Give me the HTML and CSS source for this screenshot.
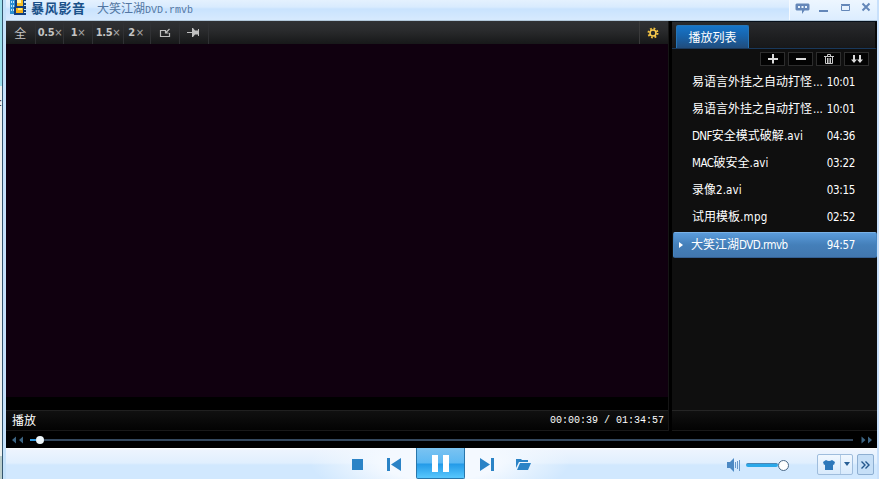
FILE: index.html
```html
<!DOCTYPE html>
<html lang="zh-CN">
<head>
<meta charset="utf-8">
<title>暴风影音</title>
<link rel="stylesheet" href="styles.css">
</head>
<body>
<div class="edge"><span class="edge-mark">:</span></div>
<div class="player">
  <header class="titlebar">
    <svg class="logo" width="18" height="16" viewBox="0 0 18 16" shape-rendering="crispEdges">
      <path d="M0 0h5v14H0z" fill="#2b8fd0"/>
      <path d="M5 0h11v7H5zM4 7h12v8H4z" fill="#123f80"/>
      <path d="M1 1h1v2H1zM3 1h1v2H3zM1 5h1v2H1zM3 5h1v2H3zM1 9h1v2H1zM3 9h1v2H3zM14 1h2v2h-2zM14 5h2v1h-2zM14 9h2v1h-2zM14 12h2v1h-2z" fill="#c5e7fa"/>
      <path d="M7 0h6v6H7z" fill="#f8bf25"/><path d="M7 0h4v3H7z" fill="#fff6b0"/>
      <path d="M6 8h7v5H6z" fill="#f6b21b"/><path d="M8 8h4v2H8z" fill="#ffe875"/>
    </svg>
    <span class="brand">暴风影音</span>
    <span class="filename">大笑江湖<span class="mono">DVD.rmvb</span></span>
    <div class="window-buttons">
      <svg width="86" height="20" viewBox="0 0 86 20">
        <path d="M6.500 3.500h12l1 1v5l-1 1h-4l-2.500 3.500v-3.500h-5.500l-1-1v-5z" fill="#6487b9"/>
        <path d="M8 6h2v2H8zM11.500 6h2v2h-2zM15 6h2v2h-2z" fill="#e8f3fd"/>
        <path d="M29 10h9v2h-9z" fill="#6487b9"/>
        <path d="M51.500 5.500h8v5h-8zM51 4.500h9" fill="none" stroke="#6487b9"/>
        <path d="M72.500 3.500l7 7M79.500 3.500l-7 7" stroke="#6487b9" stroke-width="2"/>
      </svg>
    </div>
  </header>

  <main class="content">
    <section class="stage">
      <div class="toolbar">
        <span class="tool t-full">全</span>
        <span class="tool t-half">0.5<i>×</i></span>
        <span class="tool t-one">1<i>×</i></span>
        <span class="tool t-onehalf">1.5<i>×</i></span>
        <span class="tool t-two">2<i>×</i></span>
        <span class="tool t-icon"><svg width="12" height="10" viewBox="0 0 12 10"><path d="M6 2.500H1.500v6h9V5M6.500 2v3h3M7 4.500L10.500 1" fill="none" stroke="#bdbdbd" stroke-width="1.200"/></svg></span>
        <span class="tool t-icon"><svg width="14" height="11" viewBox="0 0 14 11"><path d="M0 5h5V1h1l2 2.500h3V2h1v7h-1V7.500H8L6 10H5V6H0z" fill="#c0c0c0"/></svg></span>
        <span class="tool settings"><svg width="12" height="12" viewBox="0 0 12 12"><circle cx="6" cy="6" r="4.500" fill="none" stroke="#f5c23d" stroke-width="2" stroke-dasharray="1.770 1.764"/><circle cx="6" cy="6" r="3" fill="none" stroke="#f8ca50" stroke-width="1.600"/></svg></span>
      </div>
      <div class="video"></div>
      <div class="letterbox"></div>
      <div class="status"><span>播放</span><span class="mono time">00:00:39 / 01:34:57</span></div>
    </section>

    <aside class="playlist">
      <div class="tabs"><div class="tab">播放列表</div></div>
      <div class="list-tools">
        <span><svg width="12" height="10" viewBox="0 0 12 10"><path d="M1 5h10M6 0v9.500" stroke="#dcdcdc" stroke-width="2"/></svg></span>
        <span><svg width="12" height="10" viewBox="0 0 12 10"><path d="M1 5h10" stroke="#dcdcdc" stroke-width="2"/></svg></span>
        <span><svg width="10" height="10" viewBox="0 0 10 10"><path d="M0 2.500h10M3.500 2V.5h3V2M1.500 3v6.500h7V3M3.500 4v5M5 4v5M6.500 4v5" fill="none" stroke="#c9c9c9"/></svg></span>
        <span><svg width="12" height="10" viewBox="0 0 12 10"><path d="M3 1v7M9 1v7" stroke="#dcdcdc" stroke-width="2"/><path d="M0 5.500h6L3 9zM6 5.500h6L9 9z" fill="#dcdcdc"/></svg></span>
      </div>
      <ul class="items">
        <li><span class="name">易语言外挂之自动打怪<b class="lat dots">...</b></span><span class="len">10:01</span></li>
        <li><span class="name">易语言外挂之自动打怪<b class="lat dots">...</b></span><span class="len">10:01</span></li>
        <li><span class="name"><b class="lat dnf">DNF</b>安全模式破解<b class="lat avi">.avi</b></span><span class="len">04:36</span></li>
        <li><span class="name"><b class="lat mac">MAC</b>破安全<b class="lat avi">.avi</b></span><span class="len">03:22</span></li>
        <li><span class="name">录像<b class="lat avi">2.avi</b></span><span class="len">03:15</span></li>
        <li><span class="name">试用模板<b class="lat mpg">.mpg</b></span><span class="len">02:52</span></li>
        <li class="playing"><span class="name">大笑江湖<b class="lat rmvb">DVD.rmvb</b></span><span class="len">94:57</span></li>
      </ul>
      <div class="list-foot"></div>
    </aside>
  </main>

  <div class="seek">
    <svg class="rew" width="12" height="8" viewBox="0 0 12 8"><path d="M4 .5v7L0 4zM11 .5v7L7 4z" fill="#3d6583"/></svg>
    <div class="track"><div class="played"></div><div class="knob"></div><div class="rest"></div></div>
    <svg class="fwd" width="12" height="8" viewBox="0 0 12 8"><path d="M.5 .5v7L4.500 4zM7 .5v7L11 4z" fill="#3d6583"/></svg>
  </div>

  <footer class="controls">
    <div class="transport">
      <svg class="stop" width="11" height="11"><path d="M0 0h11v11H0z" fill="#2b83c6"/></svg>
      <svg class="prev" width="14" height="13" viewBox="0 0 14 13"><path d="M0 0h3v13H0zM14 0v13L4 6.500z" fill="#2b83c6"/></svg>
      <div class="pause"><svg width="17" height="17" viewBox="0 0 17 17"><path d="M0 0h6v17H0zM11 0h6v17h-6z" fill="#fff"/></svg></div>
      <svg class="next" width="14" height="13" viewBox="0 0 14 13"><path d="M0 0v13l10-6.500zM11 0h3v13h-3z" fill="#2b83c6"/></svg>
      <svg class="open" width="15" height="11" viewBox="0 0 15 11"><path d="M0 0h5l1 1h6v2H3L0 9zM4 4h11l-3 7H1z" fill="#2b83c6"/></svg>
    </div>
    <svg class="speaker" width="14" height="14" viewBox="0 0 14 14"><path d="M0 4h3l4-4v14l-4-4H0z" fill="#4c89c4"/><path d="M8.500 4v6M10.500 3v8M12.500 2v11" stroke="#6998c9"/></svg>
    <div class="volume"><div class="volume-fill"></div><div class="volume-knob"></div></div>
    <div class="skin"><span class="skin-main"><svg width="12" height="10" viewBox="0 0 12 10"><path d="M3 0q3 2 6 0l3 2-1 3-1-.5V10H2V4.500L1 5 0 2z" fill="#2d78bb"/></svg></span><span class="skin-drop"><svg width="6" height="4"><path d="M0 0h6L3 4z" fill="#285f96"/></svg></span></div>
    <div class="expand"><svg width="9" height="8" viewBox="0 0 9 8"><path d="M.5 .5L4 4 .5 7.500M4.500 .5L8 4l-3.500 3.500" fill="none" stroke="#25588d" stroke-width="1.400"/></svg></div>
  </footer>
</div>
<div class="frame-right"></div>
</body>
</html>
```
FILE: styles.css
```css
* { box-sizing: border-box; }
body {
  margin: 0; width: 879px; height: 479px; overflow: hidden; display: flex;
  font: 12px/16px "Noto Sans CJK SC", sans-serif; color: #fff;
  background: #d3e8fd;
}
svg { display: block; flex: none; }
.edge {
  width: 6px; flex: none; border-left: 2px solid #9de0ed;
  background: linear-gradient(90deg, #34566f 1px, #c5e2fb 1px);
  position: relative;
}
.edge::after { content: ""; position: absolute; left: -2px; top: 86px; width: 2px; height: 393px; background: linear-gradient(#eef1ee 370px, #bacdcb 370px); }
.edge-mark { position: absolute; left: -3px; top: 95px; color: #111; z-index: 1; font: 11px/14px "Liberation Sans", sans-serif; }
.player { width: 871px; flex: none; display: flex; flex-direction: column; }
.frame-right { flex: 1; background: #c8e0fb; }

.titlebar {
  height: 21px; flex: none; display: flex; align-items: flex-start; padding-left: 4px;
  background: linear-gradient(#e4f1fe 0, #d9ebfe 7px, #c9e3fe 9px, #d7eafe 20px, #8ba3b5 21px);
}
.brand { margin-left: 3px; width: 66px; font-size: 13px; line-height: 16px; font-weight: 700; letter-spacing: .7px; color: #1b5189; white-space: nowrap; }
.filename { color: #5276a2; line-height: 16px; white-space: nowrap; }
.mono { font-family: "Liberation Mono", monospace; font-size: 10px; }
.window-buttons { margin-left: auto; width: 88px; height: 20px; background: linear-gradient(#edf6ff, #dcedff); border-left: 1px solid #f5faff; }

.content { height: 410px; display: flex; background: #000; }
.stage { width: 663px; height: 410px; display: flex; flex-direction: column; border-right: 1px solid #151515; }
.toolbar { height: 23px; display: flex; background: linear-gradient(#303134, #292a2c 10px, #171819); }
.tool { height: 23px; display: flex; align-items: center; justify-content: center; border-right: 1px solid #303134; color: #c4c4c4; font: 700 11px/22px "DejaVu Sans Condensed", "Noto Sans CJK SC", sans-serif; letter-spacing: -.3px; }
.tool i { font: 400 10px/22px "DejaVu Sans", sans-serif; color: #a9a9a9; }
.t-full { width: 30px; padding-right: 1px; font: 400 12px/22px "Noto Sans CJK SC", sans-serif; }
.t-half { width: 28px; padding-left: 1px; }
.t-one { width: 29px; }
.t-onehalf { width: 31px; }
.t-two { width: 27px; gap: 1px; padding-right: 2px; }
.t-icon { width: 29px; }
.settings { margin-left: auto; width: 29px; padding-right: 2px; border-left: 1px solid #3a3a3b; border-right: 0; }
.video { height: 353px; background: #10000f; }
.letterbox { height: 13px; background: #000; }
.status { height: 21px; flex: none; display: flex; justify-content: space-between; padding: 0 4px 0 6px; line-height: 18px; border-top: 1px solid #202020; border-bottom: 1px solid #181818; background: linear-gradient(#101010, #030303); }
.time { line-height: 19px; }

.playlist { width: 205px; height: 410px; margin-left: 3px; flex: none; display: flex; flex-direction: column; background: #0f0f0f; border-top: 1px solid #07101a; }
.tabs { height: 27px; padding: 3px 0 0 4px; background: linear-gradient(#292a2d, #1d1e20 16px, #17181a); border-bottom: 1px solid #19385b; border-right: 2px solid #080808; }
.tab { width: 73px; height: 23px; border: 1px solid #2674b6; border-bottom: 0; border-radius: 2px 2px 0 0; text-align: center; line-height: 22px; background: linear-gradient(#1675ca, #1864ac 10px, #214d7d); }
.list-tools { height: 20px; display: flex; gap: 3px; padding: 3px 0 0 88px; }
.list-tools span { width: 25px; height: 14px; display: flex; align-items: center; justify-content: center; background: #030303; border: 1px solid #2d2d2d; }
.items { list-style: none; margin: 0; padding: 0; }
.items li { height: 27px; display: flex; align-items: center; padding: 0 0 2px 20px; position: relative; white-space: nowrap; }
.name { width: 134px; }
.lat, .len { font: 400 11.500px/16px "DejaVu Sans Condensed", sans-serif; }
.dots { letter-spacing: 0; margin-left: 1px; }
.dnf { letter-spacing: -.6px; }
.mac { letter-spacing: -.5px; }
.avi { letter-spacing: .1px; }
.mpg { letter-spacing: .3px; }
.rmvb { letter-spacing: -.55px; }
.len { width: 29px; text-align: right; letter-spacing: -.3px; }
.items .playing { padding: 0 0 1px 17px; margin: 1px 0 0 1px; height: 26px; border: 1px solid #78b1e8; border-color: #79b1e6 #4383bf #345f92; border-radius: 2px; background: linear-gradient(#5a9bda, #447fb9 12px, #4277af); }
.playing .name { width: 135px; }
.playing::before { content: ""; position: absolute; left: 5px; top: 9px; border: 3px solid transparent; border-left: 4px solid #fff; border-right: 0; }
.list-foot { margin-top: auto; height: 21px; border-top: 1px solid #252525; border-bottom: 1px solid #181818; background: linear-gradient(#101010, #030303); }

.seek { height: 17px; flex: none; display: flex; align-items: center; background: #000; padding: 0 4px 0 6px; }
.track { display: flex; align-items: center; width: 823px; margin-left: 6px; }
.fwd { margin-left: 8px; }
.played { width: 6px; height: 2px; background: #3298dd; }
.knob { width: 8px; height: 8px; border-radius: 4px; background: #eef7fb; }
.rest { flex: 1; height: 2px; background: #34485e; }

.controls {
  height: 31px; flex: none; display: flex; padding-left: 346px;
  background:
    radial-gradient(ellipse 130px 40px at 434px 14px, #f4f9ff 45%, #f4f9ff00 100%),
    linear-gradient(#fff 0, #edf4fe 2px, #e0effe 15px, #d1e8fe 17px, #d1e8fe);
}
.transport { width: 371px; display: flex; }
.stop { margin-top: 11px; }
.prev { margin: 10px 0 0 24px; }
.pause { width: 49px; height: 31px; margin-left: 15px; border: 1px solid #2876ab; border-top: 0; border-radius: 0 0 2px 2px; display: flex; justify-content: center; padding-top: 7px; background: linear-gradient(#7bc3f1 0, #5bb8f3 15px, #239ae8 16px, #54c4fb 29px); }
.next { margin: 10px 0 0 15px; }
.open { margin: 11px 0 0 22px; }
.speaker { margin: 10px 0 0 4px; }
.volume { width: 43px; height: 12px; display: flex; align-items: center; margin: 11px 0 0 5px; }
.volume-fill { width: 32px; height: 4px; border-radius: 2px; background: #2aa8e9; border-top: 1px solid #4b86b5; flex: none; }
.volume-knob { width: 11px; height: 11px; border: 1px solid #4b6987; border-radius: 50%; background: #fff; flex: none; }
.skin { width: 36px; height: 21px; margin: 6px 0 0 28px; display: flex; border: 1px solid #9fbddd; border-radius: 2px; background: linear-gradient(#f1f8ff, #d8eafc); }
.skin-main { width: 23px; display: flex; align-items: center; justify-content: center; border-right: 1px solid #b2cce6; }
.skin-drop { flex: 1; display: flex; align-items: center; justify-content: center; padding-bottom: 2px; }
.expand { width: 17px; height: 21px; margin: 6px 0 0 4px; display: flex; align-items: center; justify-content: center; border: 1px solid #8eafd2; border-radius: 2px; background: #c6dff7; }
```
